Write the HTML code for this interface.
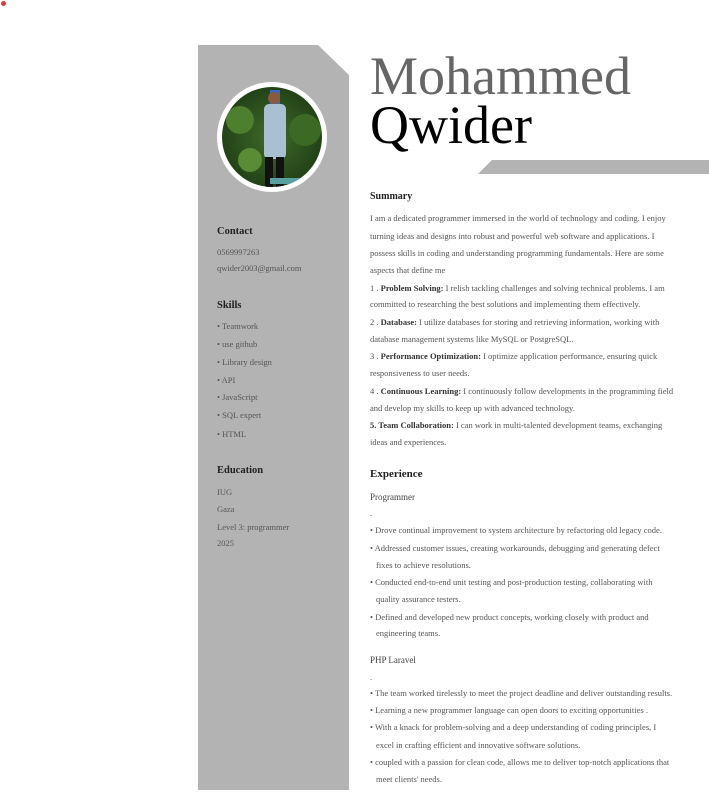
<!DOCTYPE html>
<html><head><meta charset="utf-8"><style>
*{margin:0;padding:0;box-sizing:border-box}
body{width:709px;height:807px;background:#fff;position:relative;overflow:hidden;font-family:"Liberation Serif",serif;color:#555}
.l{position:absolute;white-space:nowrap;font-size:8.5px;line-height:12px}
.h{position:absolute;white-space:nowrap;font-weight:bold;color:#222;line-height:14px}
b{color:#333}
</style></head><body>
<div style="position:absolute;left:1px;top:1px;width:5px;height:5px;border-radius:50%;background:#e53935"></div>
<svg style="position:absolute;left:0;top:0" width="709" height="807">
<polygon points="198,45 318,45 349,75 349,790 198,790" fill="#b3b3b3"/>
<polygon points="492,160 709,160 709,174 478,174" fill="#b3b3b3"/>
<defs><clipPath id="c"><circle cx="272" cy="137" r="50"/></clipPath>
<radialGradient id="g" cx="50%" cy="50%" r="60%"><stop offset="0" stop-color="#3f6b2a"/><stop offset="1" stop-color="#1d3a14"/></radialGradient></defs>
<circle cx="272" cy="137" r="55" fill="#fff"/>
<g clip-path="url(#c)">
<rect x="222" y="87" width="100" height="100" fill="url(#g)"/>
<circle cx="240" cy="120" r="14" fill="#4d7f2e"/><circle cx="305" cy="130" r="16" fill="#3c6a24"/><circle cx="250" cy="160" r="12" fill="#5a8c36"/>
<rect x="270" y="90" width="10" height="28" fill="#3a67c0"/>
<rect x="264" y="104" width="22" height="55" rx="5" fill="#a9c0d2"/>
<circle cx="274" cy="98" r="6" fill="#8a5a3e"/>
<rect x="265" y="157" width="8" height="30" fill="#111"/><rect x="276" y="157" width="8" height="30" fill="#111"/>
<rect x="270" y="178" width="50" height="6" fill="#5aa0a0"/>
</g>
</svg>
<div style="position:absolute;left:370px;top:48px;font-size:54px;line-height:56px;color:#666;white-space:nowrap">Mohammed</div>
<div style="position:absolute;left:370px;top:97px;font-size:54px;line-height:56px;color:#000;white-space:nowrap">Qwider</div>

<div class="h" style="left:217px;top:225px;font-size:10.5px">Contact</div>
<div class="l" style="left:217px;top:246px">0569997263</div>
<div class="l" style="left:217px;top:262px">qwider2003@gmail.com</div>
<div class="h" style="left:217px;top:299px;font-size:10.5px">Skills</div>
<div class="l" style="left:217px;top:320px">• Teamwork</div>
<div class="l" style="left:217px;top:338px">• use github</div>
<div class="l" style="left:217px;top:356px">• Library design</div>
<div class="l" style="left:217px;top:374px">• API</div>
<div class="l" style="left:217px;top:391px">• JavaScript</div>
<div class="l" style="left:217px;top:409px">• SQL expert</div>
<div class="l" style="left:217px;top:428px">• HTML</div>
<div class="h" style="left:217px;top:464px;font-size:10.5px">Education</div>
<div class="l" style="left:217px;top:486px">IUG</div>
<div class="l" style="left:217px;top:503px">Gaza</div>
<div class="l" style="left:217px;top:521px">Level 3: programmer</div>
<div class="l" style="left:217px;top:537px">2025</div>

<div class="h" style="left:370px;top:190px;font-size:10px">Summary</div>
<div class="l" style="left:370px;top:212px">I am a dedicated programmer immersed in the world of technology and coding. I enjoy</div>
<div class="l" style="left:370px;top:230px">turning ideas and designs into robust and powerful web software and applications. I</div>
<div class="l" style="left:370px;top:247px">possess skills in coding and understanding programming fundamentals. Here are some</div>
<div class="l" style="left:370px;top:264px">aspects that define me</div>
<div class="l" style="left:370px;top:282px">1 . <b>Problem Solving:</b> I relish tackling challenges and solving technical problems. I am</div>
<div class="l" style="left:370px;top:298px">committed to researching the best solutions and implementing them effectively.</div>
<div class="l" style="left:370px;top:316px">2 . <b>Database:</b> I utilize databases for storing and retrieving information, working with</div>
<div class="l" style="left:370px;top:333px">database management systems like MySQL or PostgreSQL.</div>
<div class="l" style="left:370px;top:350px">3 . <b>Performance Optimization:</b> I optimize application performance, ensuring quick</div>
<div class="l" style="left:370px;top:367px">responsiveness to user needs.</div>
<div class="l" style="left:370px;top:385px">4 . <b>Continuous Learning:</b> I continuously follow developments in the programming field</div>
<div class="l" style="left:370px;top:402px">and develop my skills to keep up with advanced technology.</div>
<div class="l" style="left:370px;top:419px"><b>5. Team Collaboration:</b> I can work in multi-talented development teams, exchanging</div>
<div class="l" style="left:370px;top:436px">ideas and experiences.</div>

<div class="h" style="left:370px;top:467px;font-size:11px">Experience</div>
<div class="l" style="left:370px;top:491px;font-size:9px;color:#444">Programmer</div>
<div class="l" style="left:370px;top:507px">.</div>
<div class="l" style="left:370px;top:524px">• Drove continual improvement to system architecture by refactoring old legacy code.</div>
<div class="l" style="left:370px;top:542px">• Addressed customer issues, creating workarounds, debugging and generating defect</div>
<div class="l" style="left:376px;top:559px">fixes to achieve resolutions.</div>
<div class="l" style="left:370px;top:576px">• Conducted end-to-end unit testing and post-production testing, collaborating with</div>
<div class="l" style="left:376px;top:593px">quality assurance testers.</div>
<div class="l" style="left:370px;top:611px">• Defined and developed new product concepts, working closely with product and</div>
<div class="l" style="left:376px;top:627px">engineering teams.</div>
<div class="l" style="left:370px;top:654px;font-size:9px;color:#444">PHP Laravel</div>
<div class="l" style="left:370px;top:671px">.</div>
<div class="l" style="left:370px;top:687px">• The team worked tirelessly to meet the project deadline and deliver outstanding results.</div>
<div class="l" style="left:370px;top:704px">• Learning a new programmer language can open doors to exciting opportunities .</div>
<div class="l" style="left:370px;top:721px">• With a knack for problem-solving and a deep understanding of coding principles, I</div>
<div class="l" style="left:376px;top:739px">excel in crafting efficient and innovative software solutions.</div>
<div class="l" style="left:370px;top:756px">• coupled with a passion for clean code, allows me to deliver top-notch applications that</div>
<div class="l" style="left:376px;top:773px">meet clients' needs.</div>
</body></html>
